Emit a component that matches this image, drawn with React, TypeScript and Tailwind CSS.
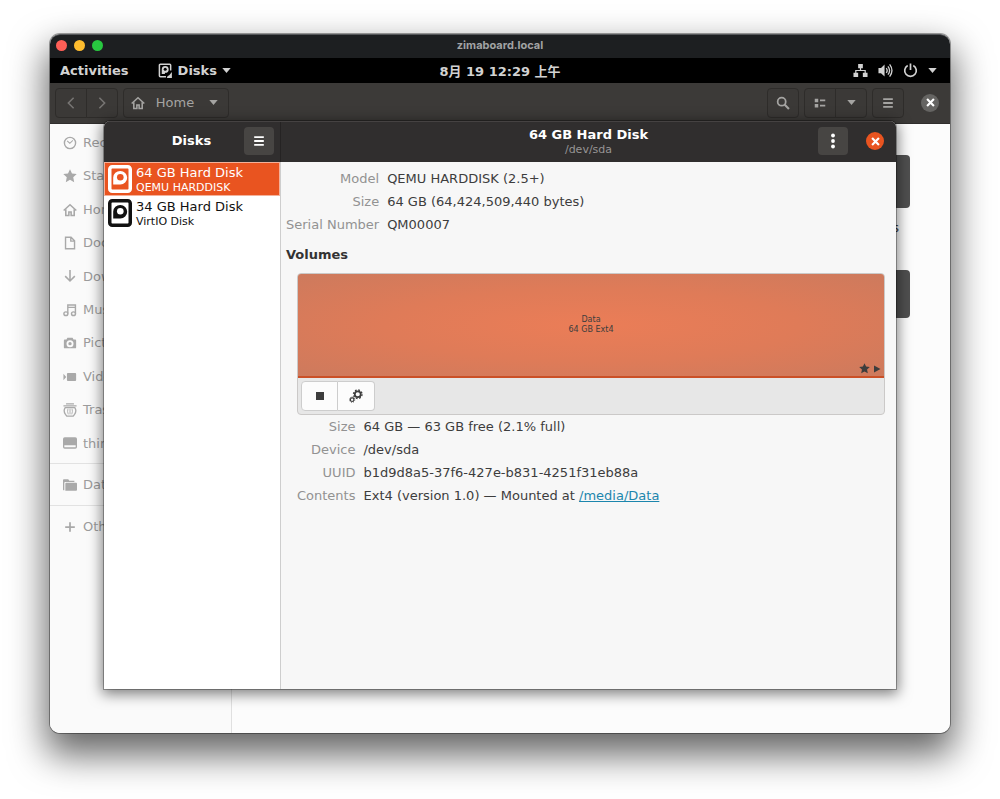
import type { ReactNode } from 'react';

const ui = "font-['DejaVu_Sans','Noto_Sans_CJK_SC',sans-serif]";

function Icon({ children, className = 'size-4' }: { children: ReactNode; className?: string }) {
  return (
    <svg viewBox="0 0 16 16" className={`${className} shrink-0`} fill="currentColor" aria-hidden="true">
      {children}
    </svg>
  );
}

const line = { fill: 'none', stroke: 'currentColor', strokeWidth: 1.8 } as const;
const starPath = 'M8 .3l2.300 4.900 5.400.6-4 3.700 1.100 5.500L8 12.300 3.200 15l1.100-5.500-4-3.700 5.400-.6z';

const HomeIcon = () => (
  <Icon>
    <path d="M.8 8.600 8 2l7.200 6.600" {...line} />
    <path d="M3.200 7.200v7h3.500v-4h2.600v4h3.500v-7" {...line} />
  </Icon>
);
const Caret = () => (
  <svg viewBox="0 0 10 6" className="h-[5px] w-[9px] shrink-0" fill="currentColor" aria-hidden="true">
    <path d="M0 0h10L5 6z" />
  </svg>
);
const MenuLines = () => (
  <Icon className="size-3.5">
    <path d="M2.500 2.500h11v2.200h-11zM2.500 6.900h11v2.200h-11zM2.500 11.300h11v2.200h-11z" />
  </Icon>
);
const Cross = () => (
  <svg viewBox="0 0 10 10" className="size-[9px]" stroke="currentColor" strokeWidth="2.400" aria-hidden="true">
    <path d="M1.200 1.200l7.600 7.600M8.800 1.200l-7.600 7.600" />
  </svg>
);
const DiskIcon = () => (
  <svg viewBox="0 0 24 28" className="h-7 w-6 shrink-0" aria-hidden="true">
    <rect x="1.750" y="1.750" width="20.500" height="24.500" rx="2.500" fill="none" stroke="currentColor" strokeWidth="3.500" />
    <path d="M5.200 19.500V12.500A7 6.800 0 1 1 12.300 19.500z" fill="currentColor" />
    <circle cx="12.300" cy="12.300" r="3.300" className="fill-(--hole)" />
  </svg>
);

const places: { label: string; icon: ReactNode }[] = [
  {
    label: 'Recent',
    icon: (
      <Icon>
        <circle cx="8" cy="8" r="6.400" {...line} strokeWidth="1.600" />
        <path d="M4.700 5.500 7.800 8.300l3.500-3.300" {...line} strokeWidth="1.200" />
      </Icon>
    ),
  },
  { label: 'Starred', icon: <Icon><path d={starPath} /></Icon> },
  { label: 'Home', icon: <HomeIcon /> },
  { label: 'Documents', icon: <Icon><path d="M2.900 1.500h6.300l4 4v9H2.900zM8.900 1.500v4.300h4.300" {...line} strokeWidth="1.600" /></Icon> },
  { label: 'Downloads', icon: <Icon><path d="M8 1v12.500M2.500 8.200 8 13.700l5.500-5.500" {...line} /></Icon> },
  {
    label: 'Music',
    icon: (
      <Icon>
        <path d="M5.500 12V2.200h8.700V12M5.500 5h8.700" {...line} strokeWidth="1.600" />
        <ellipse cx="3.300" cy="12.200" rx="2.300" ry="2.100" {...line} strokeWidth="1.600" />
        <ellipse cx="12" cy="12.200" rx="2.300" ry="2.100" {...line} strokeWidth="1.600" />
      </Icon>
    ),
  },
  {
    label: 'Pictures',
    icon: (
      <Icon>
        <path
          fillRule="evenodd"
          d="M5 2h6l1 2h2a1 1 0 0 1 1 1v8a1 1 0 0 1-1 1H2a1 1 0 0 1-1-1V5a1 1 0 0 1 1-1h2zM8 4.800a4 4 0 1 0 0 8 4 4 0 0 0 0-8z"
        />
        <circle cx="8" cy="8.800" r="3" {...line} strokeWidth="0" />
        <circle cx="8" cy="8.800" r="1.900" />
      </Icon>
    ),
  },
  {
    label: 'Videos',
    icon: <Icon><path d="M5.500 3.500H14a1 1 0 0 1 1 1v7a1 1 0 0 1-1 1H5.500a1 1 0 0 1-1-1v-7a1 1 0 0 1 1-1zM.5 4.300 3.700 8 .5 11.700z" /></Icon>,
  },
  {
    label: 'Trash',
    icon: (
      <Icon>
        <path d="M.5 3.300h15M3.500 1h9" {...line} strokeWidth="1.500" />
        <path d="M2.500 5.200Q0 9 2.800 13l1.500 2h7.400l1.500-2Q16 9 13.500 5.200z" {...line} strokeWidth="1.500" />
        <path d="M5.700 6.500q-1.100 3 .3 6.500M8 6.500V13M10.300 6.500q1.100 3-.3 6.500" {...line} strokeWidth="1" />
      </Icon>
    ),
  },
  {
    label: 'thinclient_drives',
    icon: (
      <Icon>
        <path fillRule="evenodd" d="M2 1.500h12a2 2 0 0 1 2 2v9a2 2 0 0 1-2 2H2a2 2 0 0 1-2-2v-9a2 2 0 0 1 2-2zM1.500 10.500v2.300h13v-2.300z" />
      </Icon>
    ),
  },
];

const FolderIcon = () => (
  <Icon>
    <path d="M0 2.500a1 1 0 0 1 1-1h5l1.200 1.500H13V4.500H2.500a1 1 0 0 0-1 1V14H1a1 1 0 0 1-1-1z" />
    <path d="M4 5.500h11a1 1 0 0 1 1 1v7a1 1 0 0 1-1 1H2.700V6.500a1 1 0 0 1 1.300-1z" />
  </Icon>
);

function Place({ icon, label, className = '' }: { icon: ReactNode; label: string; className?: string }) {
  return (
    <a href="#" className={`flex items-center gap-1.5 pl-3 text-[#9c9c9c] ${className}`}>
      <span className="flex w-[15px] justify-center text-[#a9a9a9] [&>svg]:size-3.5">{icon}</span>
      <span>{label}</span>
    </a>
  );
}

const barButton = 'flex h-[30px] items-center rounded border border-[#2e2c2a] bg-[#3b3937] text-[#a5a4a2]';

function Details({ rows }: { rows: [string, ReactNode][] }) {
  return (
    <dl className="grid grid-cols-[auto_1fr] gap-x-2 leading-[23px]">
      {rows.map(([name, value]) => (
        <div key={name} className="contents">
          <dt className="text-right text-[#929292]">{name}</dt>
          <dd className="text-[#3d3d3d]">{value}</dd>
        </div>
      ))}
    </dl>
  );
}

function DiskRow({ name, model, selected = false }: { name: string; model: string; selected?: boolean }) {
  return (
    <button
      type="button"
      className={`flex h-[34px] w-full items-center gap-1 border pl-[3px] text-left ${
        selected ? 'border-[#f4b19a] bg-[#e95420] text-white [--hole:#e95420]' : 'border-white bg-white text-[#111] [--hole:#fff]'
      }`}
    >
      <DiskIcon />
      <span className="block">
        <span className="block leading-4">{name}</span>
        <span className="block text-[11px] leading-[13px]">{model}</span>
      </span>
    </button>
  );
}

function DisksWindow() {
  return (
    <section className="absolute inset-x-[54px] top-[87px] bottom-11 flex flex-col overflow-hidden rounded-t-md bg-[#f7f7f7] shadow-[0_0_0_1px_rgba(0,0,0,0.3),0_3px_14px_2px_rgba(0,0,0,0.5)]">
      <header className="flex h-[41px] shrink-0 border-t border-[#454242] bg-[#302e2e] text-white">
        <div className="flex w-[177px] items-center justify-end border-r border-[#252323] pr-1.5 pb-0.5">
          <h2 className="flex-1 pl-[35px] text-center font-bold">Disks</h2>
          <button type="button" aria-label="Disks menu" className="flex h-7 w-[30px] items-center justify-center rounded-sm bg-[#474543]">
            <MenuLines />
          </button>
        </div>
        <div className="flex flex-1 items-center pr-3 pb-0.5">
          <div className="flex-1 pl-[78px] text-center">
            <h2 className="leading-4 font-bold">64 GB Hard Disk</h2>
            <p className="text-[11px] leading-[13px] text-[#979595]">/dev/sda</p>
          </div>
          <button type="button" aria-label="Drive options" className="mr-[18px] flex h-7 w-[30px] items-center justify-center rounded-sm bg-[#474543]">
            <Icon>
              <circle cx="8" cy="2.500" r="1.900" />
              <circle cx="8" cy="8" r="1.900" />
              <circle cx="8" cy="13.500" r="1.900" />
            </Icon>
          </button>
          <button type="button" aria-label="Close Disks" className="flex size-[18px] items-center justify-center rounded-full bg-[#e95420]">
            <Cross />
          </button>
        </div>
      </header>
      <div className="flex flex-1">
        <nav aria-label="Drives" className="w-[177px] shrink-0 border-r border-[#cecece] bg-white">
          <DiskRow name="64 GB Hard Disk" model="QEMU HARDDISK" selected />
          <DiskRow name="34 GB Hard Disk" model="VirtIO Disk" />
        </nav>
        <main className="min-w-0 flex-1 pt-[5px] pr-[11px] pl-[5px]">
          <Details
            rows={[
              ['Model', 'QEMU HARDDISK (2.5+)'],
              ['Size', '64 GB (64,424,509,440 bytes)'],
              ['Serial Number', 'QM00007'],
            ]}
          />
          <h3 className="mt-2 mb-[7px] leading-[22px] font-bold text-[#333]">Volumes</h3>
          <div className="ml-[11px]">
            <div className="overflow-hidden rounded border border-[#cbc9c8] bg-[#e7e7e7]">
              <div className="relative flex h-[104px] flex-col items-center justify-center border-b-2 border-[#cb5027] bg-[radial-gradient(ellipse_at_center,#eb7d57_0%,#df7b58_50%,#cd7a5d_100%)] text-center text-[8px] leading-[10px] text-[#3d3d3d]">
                <span>Data</span>
                <span>64 GB Ext4</span>
                <span className="absolute right-[3px] bottom-0.5 flex items-center gap-[3px]">
                  <Icon className="size-[11px]"><path d={starPath} /></Icon>
                  <Icon className="size-2"><path d="M2 1l13 7-13 7z" /></Icon>
                </span>
              </div>
              <div className="flex p-[3px]">
                <button type="button" aria-label="Unmount" className="flex h-[30px] w-[37px] items-center justify-center rounded-l border border-[#cdcdcd] bg-[#fcfcfc] text-[#3d3d3d]">
                  <span className="size-2 bg-[#3d3d3d]" />
                </button>
                <button type="button" aria-label="Partition options" className="flex h-[30px] w-[37px] items-center justify-center rounded-r border border-l-0 border-[#cdcdcd] bg-[#fcfcfc] text-[#3d3d3d]">
                  <Icon className="size-3.5">
                    <circle cx="10" cy="6" r="3.400" {...line} strokeWidth="2" />
                    <circle cx="10" cy="6" r="4.900" {...line} strokeWidth="1.500" strokeDasharray="2 1.850" />
                    <circle cx="3.600" cy="12.200" r="2" {...line} strokeWidth="1.300" />
                    <circle cx="3.600" cy="12.200" r="3" {...line} strokeWidth="1" strokeDasharray="1.200 1.150" />
                  </Icon>
                </button>
              </div>
            </div>
            <Details
              rows={[
                ['Size', '64 GB — 63 GB free (2.1% full)'],
                ['Device', '/dev/sda'],
                ['UUID', 'b1d9d8a5-37f6-427e-b831-4251f31eb88a'],
                [
                  'Contents',
                  <>
                    Ext4 (version 1.0) — Mounted at{' '}
                    <a href="#" className="text-[#1c86ad] underline">/media/Data</a>
                  </>,
                ],
              ]}
            />
          </div>
        </main>
      </div>
    </section>
  );
}

export default function App() {
  return (
    <div className={`flex min-h-screen flex-col bg-white px-[50px] pt-[34px] pb-[66px] text-[13px] ${ui}`}>
      <div className="relative flex flex-1 flex-col rounded-[10px] shadow-[0_0_0_1px_rgba(0,0,0,0.35),0_18px_36px_4px_rgba(0,0,0,0.6)]">
        <div className="relative flex h-6 items-center justify-center rounded-t-[10px] border-t border-[#55575a] bg-[#1d1f21] pb-0.5 font-['Inter',sans-serif] text-[11px] font-bold text-[#a2a3a4]">
          <div className="absolute left-1.5 flex gap-[7px]">
            <span className="size-[11px] rounded-full bg-[#ff5f57]" />
            <span className="size-[11px] rounded-full bg-[#febc2e]" />
            <span className="size-[11px] rounded-full bg-[#28c840]" />
          </div>
          zimaboard.local
        </div>

        <div className="grid h-[25px] grid-cols-[1fr_auto_1fr] items-center bg-black px-2.5 font-bold text-[#d2d2d2]">
          <div className="flex items-center gap-[29px]">
            <button type="button">Activities</button>
            <button type="button" className="flex items-center gap-[5px]">
              <Icon className="size-[15px]">
                <path d="M8.500 14.700H2.500a1 1 0 0 1-1-1V2.300a1 1 0 0 1 1-1h10a1 1 0 0 1 1 1V8" {...line} strokeWidth="1.600" />
                <path d="M4 10.800V6.800A3.700 3.700 0 1 1 7.700 10.500l-.5 1.300H4z" />
                <circle cx="7.700" cy="6.700" r="1.600" fill="#000" />
                <path d="M7.500 9.500l4.500 3.500M14.800 9.500v6.500H9.500q0-2.500 2.500-3z" />
              </Icon>
              Disks
              <Caret />
            </button>
          </div>
          <time className="pt-0.5">8月 19 12:29 上午</time>
          <div className="flex items-center justify-end gap-2.5 pr-[3px]">
            <Icon className="size-[15px]">
              <path d="M5.500 1h5v4.500h-5zM.5 10.500h5V15h-5zM10.500 10.500h5V15h-5z" />
              <path d="M8 5v3M3 11V8h10v3" {...line} strokeWidth="1.300" />
            </Icon>
            <Icon className="size-[15px]">
              <path d="M.5 5.200h2.700L7 1.700v12.600l-3.800-3.500H.5z" />
              <path d="M8.800 5.500q2 2.500 0 5M10.600 3.500q3.500 4.500 0 9M12.400 1.500q5 6.500 0 13" {...line} strokeWidth="1.400" />
            </Icon>
            <Icon className="size-[15px]">
              <path d="M5 2.700a6.200 6.200 0 1 0 6 0M8 .5v7" {...line} />
            </Icon>
            <Caret />
          </div>
        </div>

        <div className="flex h-[41px] items-center border-b border-[#302e2d] bg-[#3c3a38] pr-[11px] pb-px pl-[5px]">
          <button type="button" aria-label="Back" className={`${barButton} w-8 justify-center rounded-r-none text-[#777573]`}>
            <Icon className="size-3.5"><path d="M11 2 5 8l6 6" {...line} stroke="#777573" /></Icon>
          </button>
          <button type="button" aria-label="Forward" className={`${barButton} -ml-px w-8 justify-center rounded-l-none`}>
            <Icon className="size-3.5"><path d="M5 2l6 6-6 6" {...line} stroke="#777573" /></Icon>
          </button>
          <button type="button" className={`${barButton} ml-[5px] w-[106px] justify-between pr-2.5 pl-[7px]`}>
            <span className="flex [&>svg]:size-3.5"><HomeIcon /></span>
            <span className="-ml-1">Home</span>
            <Caret />
          </button>
          <button type="button" aria-label="Search" className={`${barButton} ml-auto w-8 justify-center`}>
            <Icon className="size-3.5">
              <circle cx="6.500" cy="6.500" r="4.600" {...line} strokeWidth="2" />
              <path d="M10 10l4.800 4.800" {...line} strokeWidth="2.400" />
            </Icon>
          </button>
          <button type="button" aria-label="List view" className={`${barButton} ml-[5px] w-8 justify-center rounded-r-none`}>
            <Icon className="size-3.5"><path d="M2 3h4v4H2zM2 9h4v4H2zM8 4h6v2H8zM8 10h6v2H8z" /></Icon>
          </button>
          <button type="button" aria-label="View options" className={`${barButton} -ml-px w-8 justify-center rounded-l-none`}>
            <Caret />
          </button>
          <button type="button" aria-label="Menu" className={`${barButton} ml-[5px] w-8 justify-center`}>
            <MenuLines />
          </button>
          <button type="button" aria-label="Close Files" className="ml-[17px] flex size-[18px] items-center justify-center rounded-full bg-[#656462] text-white">
            <Cross />
          </button>
        </div>

        <div className="flex flex-1 overflow-hidden rounded-b-[10px] bg-[#fcfcfc]">
          <nav aria-label="Places" className="w-[182px] shrink-0 border-r border-[#e0e0e0] bg-[#fafafa] pt-0.5">
            <div className="flex h-[334px] flex-col">
              {places.map((p) => (
                <Place key={p.label} {...p} className="flex-1" />
              ))}
            </div>
            <hr className="mt-[3px] border-[#e2e2e2]" />
            <Place icon={<FolderIcon />} label="Data" className="h-[41px]" />
            <hr className="border-[#e2e2e2]" />
            <Place icon={<Icon><path d="M8 2.500v11M2.500 8h11" {...line} strokeWidth="2" /></Icon>} label="Other Locations" className="h-[41px]" />
          </nav>
          <div className="flex flex-1 flex-col items-end pt-[31px] pr-10">
            <div className="h-[53px] w-16 rounded bg-[#505050]" />
            <span className="mt-2.5 mr-[11px] h-[52px] leading-5 text-[#3d3d3d]">s</span>
            <div className="h-12 w-16 rounded bg-[#505050]" />
          </div>
        </div>

        <DisksWindow />
      </div>
    </div>
  );
}
